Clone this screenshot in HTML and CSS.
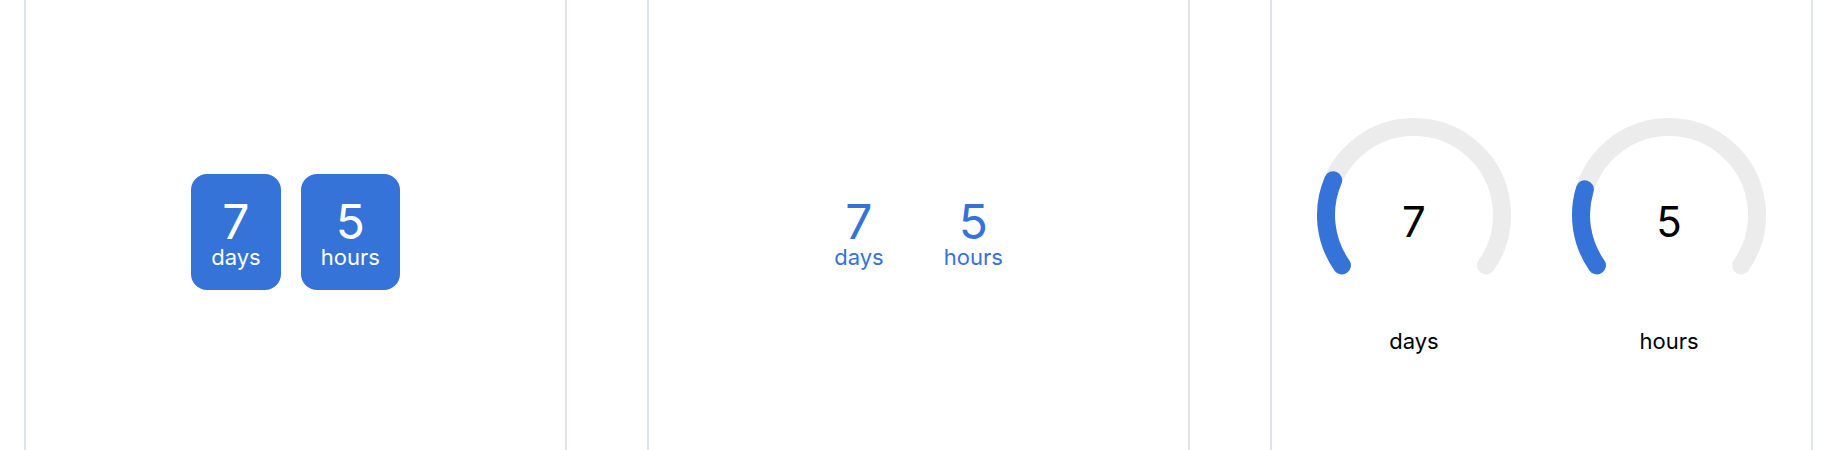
FILE: index.html
```html
<!DOCTYPE html>
<html lang="en">
<head>
    <meta charset="UTF-8">
    <meta name="viewport" content="width=device-width, initial-scale=1.0">
    <title>Countdown</title>
    <link rel="stylesheet" href="styles.css">
</head>
<body>
    <div class="row">
        <!-- filled tiles -->
        <div class="panel">
            <div class="counter solid">
                <div class="unit">
                    <span class="num">7</span>
                    <span class="label">days</span>
                </div>
                <div class="unit">
                    <span class="num">5</span>
                    <span class="label">hours</span>
                </div>
            </div>
        </div>

        <!-- plain text -->
        <div class="panel">
            <div class="counter plain">
                <div class="unit">
                    <span class="num">7</span>
                    <span class="label">days</span>
                </div>
                <div class="unit">
                    <span class="num">5</span>
                    <span class="label">hours</span>
                </div>
            </div>
        </div>

        <!-- gauges, 250deg track -->
        <div class="panel">
            <div class="gauges">
                <div class="gauge">
                    <svg viewBox="0 0 200 200" width="200" height="200">
                        <path class="track" d="M 27.91 150.47 A 88 88 0 1 1 172.09 150.47"/>
                        <path class="bar" d="M 27.91 150.47 A 88 88 0 1 1 172.09 150.47" pathLength="100" stroke-dasharray="23.3 100"/>
                        <text class="gauge-num" x="100" y="122">7</text>
                    </svg>
                    <div class="gauge-label">days</div>
                </div>
                <div class="gauge">
                    <svg viewBox="0 0 200 200" width="200" height="200">
                        <path class="track" d="M 27.91 150.47 A 88 88 0 1 1 172.09 150.47"/>
                        <path class="bar" d="M 27.91 150.47 A 88 88 0 1 1 172.09 150.47" pathLength="100" stroke-dasharray="20.8 100"/>
                        <text class="gauge-num" x="100" y="122">5</text>
                    </svg>
                    <div class="gauge-label">hours</div>
                </div>
            </div>
        </div>
    </div>
</body>
</html>
```

FILE: styles.css
```css
* {
    margin: 0;
    padding: 0;
    box-sizing: border-box;
}

html, body {
    height: 100%;
    overflow: hidden;
    background: #fff;
}

body {
    font-family: Inter, "Noto Sans", sans-serif;
}

.row {
    display: flex;
    gap: 80px;
    padding: 0 23px 0 24px;
}

.panel {
    flex: 1;
    height: 464px;
    border-left: 2px solid #dde3ee;
    border-right: 2px solid #dde3ee;
    display: flex;
    align-items: center;
    justify-content: center;
}

/* counters */
.counter {
    display: flex;
    gap: 20px;
}
.counter .unit {
    display: flex;
    flex-direction: column;
    align-items: center;
    padding: 24px 20px 22px;
    border-radius: 16px;
}
.counter .num {
    font-size: 48px;
    line-height: 48px;
}
.counter .label {
    font-size: 22px;
    line-height: 22px;
}
.counter.solid .unit {
    background-color: #3573d9;
    color: #fff;
}
.counter.plain .unit {
    color: #3573d9;
}

/* gauges */
.gauges {
    display: flex;
    gap: 55px;
    padding-top: 4px;
}
.gauge {
    width: 200px;
    display: flex;
    flex-direction: column;
    align-items: center;
}
.gauge svg {
    display: block;
}
.gauge .track,
.gauge .bar {
    fill: none;
    stroke-width: 18;
    stroke-linecap: round;
}
.gauge .track {
    stroke: #ececec;
}
.gauge .bar {
    stroke: #3573d9;
}
.gauge-num {
    font-family: Inter, "Noto Sans", sans-serif;
    font-size: 42px;
    fill: #000;
    text-anchor: middle;
}
.gauge-label {
    margin-top: 14px;
    font-size: 22px;
    line-height: 24px;
    color: #000;
}
```
